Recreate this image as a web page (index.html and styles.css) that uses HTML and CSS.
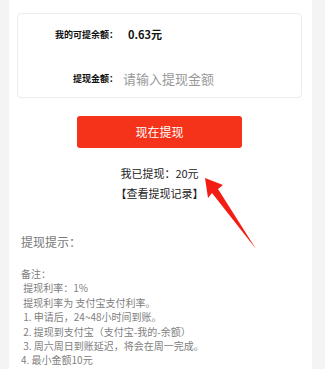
FILE: index.html
```html
<!DOCTYPE html>
<html lang="zh-CN">
<head>
<meta charset="utf-8">
<link rel="stylesheet" href="styles.css">
</head>
<body>
<div class="page">
  <div class="card">
    <div class="row row-balance">
      <span class="label">我的可提余额：</span>
      <span class="amount">0.63元</span>
    </div>
    <div class="row row-input">
      <span class="label">提现金额：</span>
      <span class="placeholder">请输入提现金额</span>
    </div>
  </div>
  <div class="action">
    <div class="btn">现在提现</div>
    <div class="done">我已提现：20元</div>
    <div class="record">【查看提现记录】</div>
  </div>
  <div class="tips-title">提现提示：</div>
  <div class="notes">
    <div class="note">备注：</div>
    <div class="note"> 提现利率：1%</div>
    <div class="note"> 提现利率为 支付宝支付利率。</div>
    <div class="note"> 1. 申请后，24~48小时间到账。</div>
    <div class="note"> 2. 提现到支付宝（支付宝-我的-余额）</div>
    <div class="note"> 3. 周六周日到账延迟，将会在周一完成。</div>
    <div class="note">4. 最小金额10元</div>
  </div>
</div>
<svg class="arrow" width="325" height="369" viewBox="0 0 325 369">
  <polygon points="205,178 223,185 218,189 256,249 212,193 208,198" fill="#f41d14"/>
</svg>
</body>
</html>
```

FILE: styles.css
```css
html, body {
  margin: 0;
  padding: 0;
}
body {
  background: #f4f4f4;
  font-family: "Noto Sans CJK SC", "Noto Sans", sans-serif;
  color: #222;
  position: relative;
  width: 325px;
  height: 369px;
  overflow: hidden;
}
.page {
  margin-left: 9px;
  width: 303px;
  min-height: 369px;
  background: #fff;
  padding-top: 13px;
  box-sizing: border-box;
}
.card {
  margin: 0 10px 0 8px;
  height: 85px;
  box-sizing: border-box;
  border: 1px solid #ececec;
  border-radius: 4px;
  padding-top: 10px;
}
.row {
  display: flex;
  align-items: center;
  height: 20px;
}
.row-input {
  margin-top: 24px;
}
.label {
  width: 100px;
  text-align: right;
  font-size: 9px;
  font-weight: bold;
  color: #111;
}
.amount {
  margin-left: 10px;
  font-size: 11px;
  font-weight: bold;
  color: #111;
}
.placeholder {
  margin-left: 5px;
  font-size: 13px;
  color: #999;
}
.action {
  margin-left: 68px;
  width: 165px;
  margin-top: 18px;
  text-align: center;
}
.btn {
  height: 32px;
  line-height: 32px;
  background: #f5331a;
  border-radius: 3px;
  color: #fff;
  font-size: 12px;
}
.done {
  margin-top: 15px;
  line-height: 20px;
  font-size: 11px;
  color: #222;
}
.record {
  line-height: 20px;
  font-size: 11px;
  color: #222;
}
.tips-title {
  margin-top: 29px;
  padding-left: 12px;
  line-height: 20px;
  font-size: 12px;
  color: #777;
}
.notes {
  margin-top: 15px;
  padding-left: 12px;
}
.note {
  white-space: pre;
  font-size: 10px;
  line-height: 14.4px;
  color: #808080;
}
.arrow {
  position: absolute;
  left: 0;
  top: 0;
  pointer-events: none;
}
```
